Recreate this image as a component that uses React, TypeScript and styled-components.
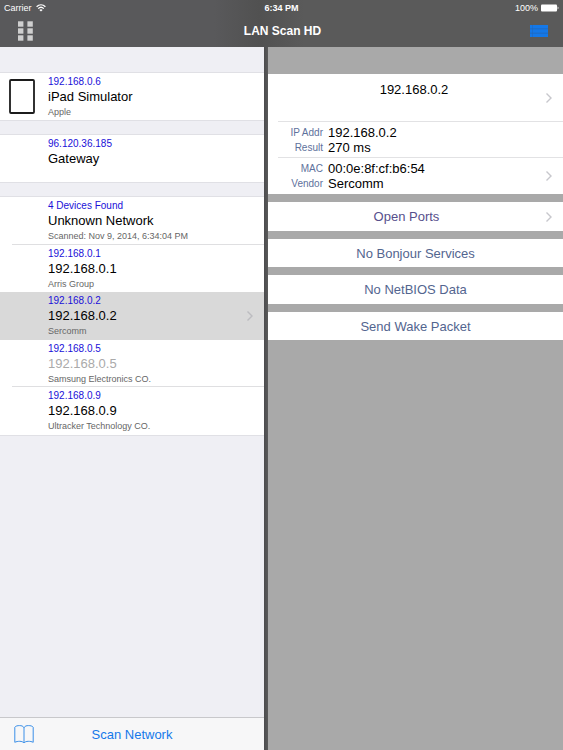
import React from "react";
import styled, { createGlobalStyle } from "styled-components";

const GlobalStyle = createGlobalStyle`
  *, *::before, *::after { box-sizing: border-box; }
  body {
    margin: 0;
    font-family: "Liberation Sans", Helvetica, Arial, sans-serif;
    font-size: 13px;
    color: #000;
    background: #a9a9a9;
  }
  h1, h2, p, ul, dl, dd { margin: 0; padding: 0; }
  ul { list-style: none; }
  button {
    font: inherit;
    color: inherit;
    border: 0;
    padding: 0;
    background: none;
    cursor: pointer;
  }
  svg { display: block; }
`;

const Screen = styled.div`
  min-height: 100vh;
  display: flex;
  flex-direction: column;
`;

const TopBar = styled.header`
  height: 47px;
  flex: none;
  color: #fff;
  background: linear-gradient(90deg, #59595b 0%, #59595b 38%, #515151 46%, #5a5a5a 54%, #5a5a5a 100%);
`;

const StatusBar = styled.div`
  height: 16px;
  display: grid;
  grid-template-columns: 1fr auto 1fr;
  align-items: center;
  padding: 0 4px;
  font-size: 9px;
`;

const StatusGroup = styled.div<{ $end?: boolean }>`
  display: flex;
  align-items: center;
  gap: ${(p) => (p.$end ? 3 : 4)}px;
  justify-content: ${(p) => (p.$end ? "flex-end" : "flex-start")};
`;

const Clock = styled.span`
  font-weight: bold;
`;

const NavBar = styled.nav`
  height: 30px;
  display: grid;
  grid-template-columns: 1fr auto 1fr;
  align-items: center;
  padding: 0 15px 0 17px;
`;

const NavButton = styled.button<{ $end?: boolean }>`
  justify-self: ${(p) => (p.$end ? "end" : "start")};
`;

const Title = styled.h1`
  font-size: 12px;
  line-height: 16px;
`;

const Split = styled.main`
  flex: 1;
  display: grid;
  grid-template-columns: minmax(0, 264fr) 4px minmax(0, 295fr);
`;

const Master = styled.section`
  display: flex;
  flex-direction: column;
  background: #efeff4;
`;

const Divider = styled.div`
  background: linear-gradient(90deg, #4c4c4e, #5a5a5a);
`;

const Groups = styled.div`
  flex: 1;
  display: flex;
  flex-direction: column;
  gap: 15px;
  padding-top: 26px;
`;

const Group = styled.ul`
  background: #fff;
  box-shadow: 0 -1px 0 #e0e0e5, 0 1px 0 #e0e0e5;
`;

const Item = styled.li<{ $selected?: boolean }>`
  height: 48px;
  background: ${(p) => (p.$selected ? "#d9d9d9" : "transparent")};
  &:nth-child(even), &:only-child { height: 47px; }
`;

const ItemButton = styled.button<{ $line?: boolean }>`
  width: 100%;
  height: 100%;
  display: grid;
  grid-template-columns: 36px 1fr auto;
  align-items: center;
  text-align: left;
  padding: 0 10px 0 12px;
  background: ${(p) =>
    p.$line ? "linear-gradient(#dfdfe1, #dfdfe1) 12px 100% / 100% 1px no-repeat" : "none"};
`;

const Thumb = styled.span`
  margin-left: -3px;
`;

const ItemText = styled.span`
  display: flex;
  flex-direction: column;
  align-self: start;
  padding-top: 2px;
`;

const Caption = styled.span`
  font-size: 10px;
  line-height: 13px;
  color: #1a10d8;
`;

const Name = styled.span<{ $dim?: boolean }>`
  font-size: 13px;
  line-height: 17px;
  color: ${(p) => (p.$dim ? "#aaa" : "#000")};
`;

const Note = styled.span`
  font-size: 9px;
  line-height: 14px;
  color: #666;
`;

const Toolbar = styled.footer`
  height: 33px;
  display: grid;
  grid-template-columns: 20px 1fr 20px;
  align-items: center;
  padding: 0 14px;
  color: #1479ea;
  background: #f7f7f8;
  border-top: 1px solid #c8c8cb;
`;

const Detail = styled.section`
  padding-top: 27px;
  display: flex;
  flex-direction: column;
  gap: 8px;
  background: #a9a9a9;
`;

const Card = styled.div`
  background: #fff;
`;

const Row = styled.div<{ $tall?: boolean; $line?: boolean }>`
  min-height: ${(p) => (p.$tall ? 48 : 36)}px;
  display: grid;
  grid-template-columns: 1fr 8px;
  align-items: center;
  padding-right: 10px;
  background: ${(p) =>
    p.$line ? "linear-gradient(#e2e2e4, #e2e2e4) 10px 100% / 100% 1px no-repeat" : "none"};
`;

const Host = styled.h2`
  align-self: start;
  padding: 7px 0 0 15px;
  text-align: center;
  font-size: 13px;
  line-height: 17px;
  font-weight: normal;
`;

const Facts = styled.dl`
  display: grid;
  grid-template-columns: 55px 1fr;
  column-gap: 5px;
  font-size: 13px;
  line-height: 15px;
`;

const Label = styled.dt`
  font-size: 10px;
  text-align: right;
  color: #5e719c;
`;

const Actions = styled.ul`
  display: flex;
  flex-direction: column;
  gap: 8px;
`;

const Action = styled.li`
  height: 29px;
  background: #fff;
  &:nth-child(even) { height: 28px; }
`;

const ActionButton = styled.button<{ $more?: boolean }>`
  width: 100%;
  height: 100%;
  display: flex;
  align-items: center;
  padding: 0 ${(p) => (p.$more ? 10 : 0)}px 0 0;
  color: ${(p) => (p.$more ? "#574f8c" : "#53658f")};
`;

const ActionLabel = styled.span`
  flex: 1;
`;

const Chevron = ({ color = "#c7c7cc" }: { color?: string }) => (
  <svg width="8" height="12" viewBox="0 0 8 12" fill="none" stroke={color} strokeWidth="1.4" aria-hidden="true">
    <path d="M1.5 1.5 6 6 1.5 10.5" />
  </svg>
);

const WifiIcon = () => (
  <svg width="10" height="8" viewBox="0 0 10 8" fill="none" stroke="#fff" strokeWidth="1.3" aria-label="Wi-Fi">
    <path d="M.6 2.8C3.2.3 6.8.3 9.4 2.8M2.2 4.6c1.6-1.5 4-1.5 5.6 0" />
    <path d="M5 7.6 3.4 5.9c.9-.8 2.3-.8 3.2 0z" fill="#fff" stroke="none" />
  </svg>
);

const BatteryIcon = () => (
  <svg width="18" height="8" viewBox="0 0 18 8" fill="#fff" aria-label="Battery">
    <rect x="0" y=".5" width="16" height="7" rx="1" />
    <path d="M16.6 2.6c1.2.3 1.2 2.5 0 2.8z" />
  </svg>
);

const GridIcon = () => (
  <svg width="17" height="20" viewBox="0 0 17 20" fill="#cfcfcf" aria-hidden="true">
    {[0, 7, 14].map((y) => (
      <React.Fragment key={y}>
        <rect x="1" y={y + 0.3} width="5.4" height="5.4" />
        <rect x="10.4" y={y + 0.3} width="5.4" height="5.4" />
      </React.Fragment>
    ))}
  </svg>
);

const ListIcon = () => (
  <svg width="18" height="12" viewBox="0 0 18 12" aria-hidden="true">
    <rect width="18" height="12" fill="#2168bd" />
    {[0, 4.3, 8.6].map((y) => (
      <g key={y} fill="#1478e8">
        <rect x="0" y={y} width="2.4" height="3.4" />
        <rect x="2.9" y={y} width="15.1" height="3.4" />
      </g>
    ))}
  </svg>
);

const TabletIcon = () => (
  <svg width="26" height="35" viewBox="0 0 26 35" aria-hidden="true">
    <rect x="1" y="1" width="24" height="33" rx="1" fill="#fff" stroke="#1c1c1c" strokeWidth="1.8" />
  </svg>
);

const BookIcon = () => (
  <svg width="20" height="19" viewBox="0 0 20 19" fill="none" stroke="#3a8fe8" strokeWidth="1" aria-hidden="true">
    <path d="M10 2.8C9.2 1 7.4.6 5.6.6 3.6.6 1.8.9.8 2.2v15.1c2.600-1.300 7.600-1.600 9.200.7 1.600-2.300 6.600-2 9.200-.7V2.200C18.200.9 16.400.6 14.400.6c-1.800 0-3.600.4-4.400 2.200zM10 2.800V18" />
  </svg>
);

type Device = { caption: string; name: string; note?: string; dim?: boolean; selected?: boolean; tablet?: boolean };

const groups: Device[][] = [
  [{ caption: "192.168.0.6", name: "iPad Simulator", note: "Apple", tablet: true }],
  [{ caption: "96.120.36.185", name: "Gateway" }],
  [
    { caption: "4 Devices Found", name: "Unknown Network", note: "Scanned: Nov 9, 2014, 6:34:04 PM" },
    { caption: "192.168.0.1", name: "192.168.0.1", note: "Arris Group" },
    { caption: "192.168.0.2", name: "192.168.0.2", note: "Sercomm", selected: true },
    { caption: "192.168.0.5", name: "192.168.0.5", note: "Samsung Electronics CO.", dim: true },
    { caption: "192.168.0.9", name: "192.168.0.9", note: "Ultracker Technology CO." },
  ],
];

const actions = [
  { label: "Open Ports", more: true },
  { label: "No Bonjour Services" },
  { label: "No NetBIOS Data" },
  { label: "Send Wake Packet" },
];

export default function App() {
  return (
    <>
      <GlobalStyle />
      <Screen>
        <TopBar>
          <StatusBar>
            <StatusGroup>
              Carrier <WifiIcon />
            </StatusGroup>
            <Clock>6:34 PM</Clock>
            <StatusGroup $end>
              100% <BatteryIcon />
            </StatusGroup>
          </StatusBar>
          <NavBar>
            <NavButton aria-label="Grid view">
              <GridIcon />
            </NavButton>
            <Title>LAN Scan HD</Title>
            <NavButton $end aria-label="List view">
              <ListIcon />
            </NavButton>
          </NavBar>
        </TopBar>
        <Split>
          <Master>
            <Groups>
              {groups.map((devices, g) => (
                <Group key={g}>
                  {devices.map((d, i) => (
                    <Item key={d.caption} $selected={d.selected}>
                      <ItemButton
                        $line={i < devices.length - 1 && !d.selected && !devices[i + 1].selected}
                      >
                        <Thumb>{d.tablet && <TabletIcon />}</Thumb>
                        <ItemText>
                          <Caption>{d.caption}</Caption>
                          <Name $dim={d.dim}>{d.name}</Name>
                          {d.note && <Note>{d.note}</Note>}
                        </ItemText>
                        {d.selected && <Chevron color="#bcbcc0" />}
                      </ItemButton>
                    </Item>
                  ))}
                </Group>
              ))}
            </Groups>
            <Toolbar>
              <button aria-label="Bookmarks">
                <BookIcon />
              </button>
              <button>Scan Network</button>
            </Toolbar>
          </Master>
          <Divider />
          <Detail>
            <Card>
              <Row $tall $line>
                <Host>192.168.0.2</Host>
                <Chevron />
              </Row>
              <Row $line>
                <Facts>
                  <Label>IP Addr</Label>
                  <dd>192.168.0.2</dd>
                  <Label>Result</Label>
                  <dd>270 ms</dd>
                </Facts>
              </Row>
              <Row>
                <Facts>
                  <Label>MAC</Label>
                  <dd>00:0e:8f:cf:b6:54</dd>
                  <Label>Vendor</Label>
                  <dd>Sercomm</dd>
                </Facts>
                <Chevron />
              </Row>
            </Card>
            <Actions>
              {actions.map((a) => (
                <Action key={a.label}>
                  <ActionButton $more={a.more}>
                    <ActionLabel>{a.label}</ActionLabel>
                    {a.more && <Chevron />}
                  </ActionButton>
                </Action>
              ))}
            </Actions>
          </Detail>
        </Split>
      </Screen>
    </>
  );
}
